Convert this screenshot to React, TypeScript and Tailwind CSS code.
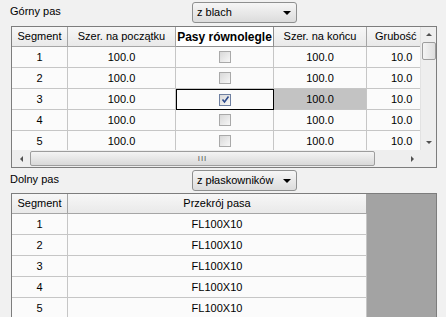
import React from 'react';

const font = { fontFamily: '"Liberation Sans", Arial, sans-serif' };

function Dropdown({ label }: { label: string }) {
  return (
    <div className="w-[105px] h-[21px] rounded-[3px] border border-[#8e8f8f] bg-gradient-to-b from-[#f6f6f6] to-[#dcdcdc] flex items-center justify-between pl-[4px] pr-[5px] text-[11px] text-black">
      <span>{label}</span>
      <span className="w-0 h-0 border-l-[4px] border-r-[4px] border-t-[4px] border-l-transparent border-r-transparent border-t-black" />
    </div>
  );
}

function Checkbox({ checked }: { checked?: boolean }) {
  return (
    <div className={`w-[12px] h-[12px] border ${checked ? 'border-[#6e7fa0]' : 'border-[#a9a9a9]'} bg-gradient-to-br from-[#d8d8d8] to-[#f7f7f7] flex items-center justify-center`}>
      {checked && (
        <svg width="9" height="9" viewBox="0 0 9 9">
          <path d="M1.5 4.5 L3.5 7 L7.5 1.5" fill="none" stroke="#2d4b8c" strokeWidth="1.6" />
        </svg>
      )}
    </div>
  );
}

const hdr = 'h-[20px] flex items-center justify-center border-r border-b border-[#a5a5a5] bg-gradient-to-b from-[#f7f7f7] to-[#e9e9e9] whitespace-nowrap overflow-hidden';
const cell = 'h-[21px] flex items-center border-r border-b border-[#c6c6c6] bg-[#fbfbfb] whitespace-nowrap overflow-hidden';

export default function App() {
  const rows = [1, 2, 3, 4, 5];
  return (
    <div className="w-[446px] h-[317px] bg-[#f1f1f1] overflow-hidden text-[11px] text-black" style={font}>
      {/* Górny pas */}
      <div className="flex items-center h-[21px] mt-[2px]">
        <span className="ml-[10px] w-[182px] -mt-[2px]">Górny pas</span>
        <Dropdown label="z blach" />
      </div>
      <div className="ml-[11px] mt-[3px] w-[426px] h-[142px] border border-[#7d7d7d] flex flex-col bg-[#fbfbfb]">
        <div className="flex flex-1 min-h-0">
          <div className="w-[408px] overflow-hidden">
            <div className="grid grid-cols-[56px_108px_98px_93px_60px] w-[415px]">
              <div className={hdr}>Segment</div>
              <div className={hdr}>Szer. na początku</div>
              <div className="h-[20px] flex items-center justify-center border-r border-b border-[#8f8f8f] bg-white font-bold text-[12px] whitespace-nowrap">Pasy równolegle</div>
              <div className={hdr}>Szer. na końcu</div>
              <div className={`${hdr} !justify-start pl-[8px]`}>Grubość p</div>
              {rows.map((r) => (
                <React.Fragment key={r}>
                  <div className={`${cell} justify-center`}>{r}</div>
                  <div className={`${cell} justify-center`}>100.0</div>
                  {r === 3 ? (
                    <div className="h-[21px] flex items-center justify-center border border-black bg-[#fbfbfb]">
                      <Checkbox checked />
                    </div>
                  ) : (
                    <div className={`${cell} justify-center`}>
                      <Checkbox />
                    </div>
                  )}
                  <div className={`${cell} justify-center ${r === 3 ? '!bg-[#c3c3c3]' : ''}`}>100.0</div>
                  <div className={`${cell} justify-start pl-[24px]`}>10.0</div>
                </React.Fragment>
              ))}
            </div>
          </div>
          {/* vertical scrollbar */}
          <div className="w-[16px] bg-[#eeeeee] border-l border-[#e2e2e2] flex flex-col items-center">
            <div className="h-[15px] flex items-center justify-center">
              <span className="w-0 h-0 border-l-[3px] border-r-[3px] border-b-[3px] border-l-transparent border-r-transparent border-b-[#505050]" />
            </div>
            <div className="w-[14px] h-[18px] rounded-[2px] border border-[#9d9d9d] bg-gradient-to-r from-[#f4f4f4] to-[#dedede]" />
            <div className="flex-1" />
            <div className="h-[16px] flex items-center justify-center">
              <span className="w-0 h-0 border-l-[3px] border-r-[3px] border-t-[3px] border-l-transparent border-r-transparent border-t-[#505050]" />
            </div>
          </div>
        </div>
        {/* horizontal scrollbar */}
        <div className="flex h-[17px] shrink-0">
          <div className="w-[408px] bg-[#eeeeee] flex items-center">
            <div className="w-[18px] flex items-center justify-center">
              <span className="w-0 h-0 border-t-[3px] border-b-[3px] border-r-[3px] border-t-transparent border-b-transparent border-r-[#505050]" />
            </div>
            <div className="w-[345px] h-[15px] rounded-[2px] border border-[#9d9d9d] bg-gradient-to-b from-[#f4f4f4] to-[#d9d9d9] flex items-center justify-center text-[8px] text-[#555] tracking-[1px]">III</div>
            <div className="flex-1 flex items-center justify-end pr-[6px]">
              <span className="w-0 h-0 border-t-[3px] border-b-[3px] border-l-[3px] border-t-transparent border-b-transparent border-l-[#505050]" />
            </div>
          </div>
          <div className="w-[16px] bg-[#eeeeee]" />
        </div>
      </div>

      {/* Dolny pas */}
      <div className="flex items-center h-[21px] mt-[2px]">
        <span className="ml-[10px] w-[182px] -mt-[2px]">Dolny pas</span>
        <Dropdown label="z płaskowników" />
      </div>
      <div className="ml-[11px] mt-[2px] w-[426px] h-[140px] border border-[#7d7d7d] border-b-0 flex bg-[#a3a3a3]">
        <div className="grid grid-cols-[56px_299px] content-start w-[355px]">
          <div className={hdr}>Segment</div>
          <div className={hdr}>Przekrój pasa</div>
          {rows.map((r) => (
            <React.Fragment key={r}>
              <div className={`${cell} justify-center`}>{r}</div>
              <div className={`${cell} justify-center`}>FL100X10</div>
            </React.Fragment>
          ))}
        </div>
      </div>
    </div>
  );
}
